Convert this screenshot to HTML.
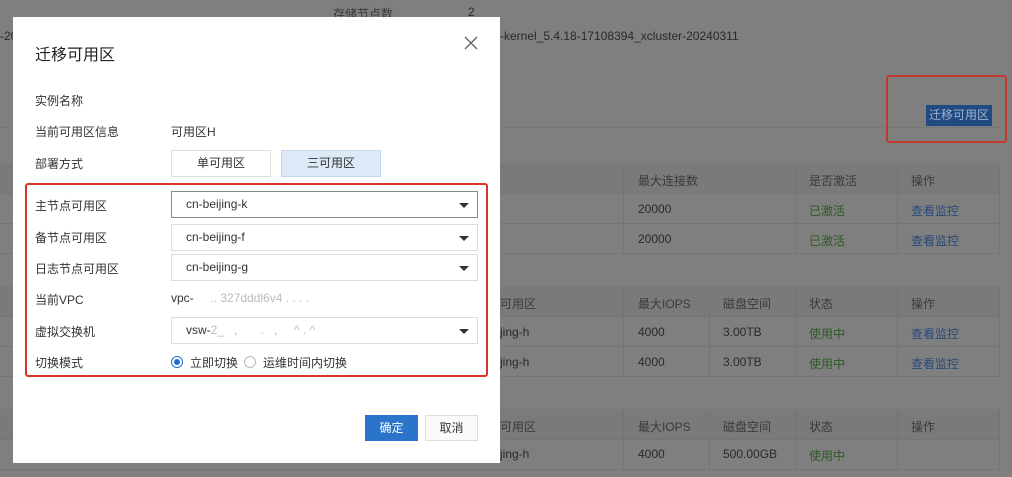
<!DOCTYPE html>
<html><head><meta charset="utf-8"><style>
*{margin:0;padding:0;box-sizing:border-box}
body{width:1012px;height:477px;overflow:hidden;background:#7f7f7f;font-family:"Liberation Sans","Noto Sans CJK SC",sans-serif;font-size:12px;color:#2a2a2a;position:relative}
.a{position:absolute;white-space:nowrap}
.tb{position:absolute;left:0;width:999px;border-bottom:1px solid #747474}
.hd{background:#7a7a7a}
.vl{position:absolute;width:1px;background:#747474}
.g{color:#2f5a22}.l{color:#284a78}
.modal{position:absolute;left:13px;top:17px;width:487px;height:446px;background:#fff}
.m{position:absolute;white-space:nowrap;color:#333}
.sel{position:absolute;left:158px;width:307px;height:27px;border:1px solid #ddd;padding-left:14px;line-height:25px;font-size:12px;color:#333}
.sel::after{content:"";position:absolute;right:8px;top:11px;border-left:5px solid transparent;border-right:5px solid transparent;border-top:5px solid #333}
</style></head><body>
<div class="a" style="left:333px;top:5px;color:#3a3a3a">存储节点数</div>
<div class="a" style="left:468px;top:5px;color:#2a2a2a">2</div>
<div class="a" style="left:0;top:29px">-20</div>
<div class="a" style="left:500px;top:29px">-kernel_5.4.18-17108394_xcluster-20240311</div>
<div class="a" style="left:0;top:127px;width:999px;border-top:1px solid #777"></div>
<div class="a" style="left:886px;top:75px;width:121px;height:68px;border:2px solid #c0392b;border-radius:3px"></div>
<div class="a" style="left:926px;top:105px;width:66px;height:21px;background:#1f4a82;color:#9fb3cc;text-align:center;line-height:21px">迁移可用区</div>
<!-- table1 -->
<div class="tb hd" style="top:163px;height:31px"></div>
<div class="tb" style="top:194px;height:30px"></div>
<div class="tb" style="top:224px;height:30px"></div>
<div class="vl" style="left:623px;top:163px;height:91px"></div><div class="vl" style="left:795px;top:163px;height:91px"></div><div class="vl" style="left:897px;top:163px;height:91px"></div><div class="vl" style="left:999px;top:163px;height:91px"></div>
<div class="a" style="left:638px;top:172px;color:#3a3a3a">最大连接数</div><div class="a" style="left:809px;top:172px;color:#3a3a3a">是否激活</div><div class="a" style="left:911px;top:172px;color:#3a3a3a">操作</div>
<div class="a" style="left:638px;top:202px">20000</div><div class="a g" style="left:809px;top:202px">已激活</div><div class="a l" style="left:911px;top:202px">查看监控</div>
<div class="a" style="left:638px;top:232px">20000</div><div class="a g" style="left:809px;top:232px">已激活</div><div class="a l" style="left:911px;top:232px">查看监控</div>
<!-- table2 -->
<div class="tb hd" style="top:286px;height:31px"></div>
<div class="tb" style="top:317px;height:30px"></div>
<div class="tb" style="top:347px;height:30px"></div>
<div class="vl" style="left:623px;top:286px;height:91px"></div><div class="vl" style="left:709px;top:286px;height:91px"></div><div class="vl" style="left:795px;top:286px;height:91px"></div><div class="vl" style="left:897px;top:286px;height:91px"></div><div class="vl" style="left:999px;top:286px;height:91px"></div>
<div class="a" style="left:500px;top:295px;color:#3a3a3a">可用区</div><div class="a" style="left:638px;top:295px;color:#3a3a3a">最大IOPS</div><div class="a" style="left:723px;top:295px;color:#3a3a3a">磁盘空间</div><div class="a" style="left:809px;top:295px;color:#3a3a3a">状态</div><div class="a" style="left:911px;top:295px;color:#3a3a3a">操作</div>
<div class="a" style="left:500px;top:325px">jing-h</div><div class="a" style="left:638px;top:325px">4000</div><div class="a" style="left:723px;top:325px">3.00TB</div><div class="a g" style="left:809px;top:325px">使用中</div><div class="a l" style="left:911px;top:325px">查看监控</div>
<div class="a" style="left:500px;top:355px">jing-h</div><div class="a" style="left:638px;top:355px">4000</div><div class="a" style="left:723px;top:355px">3.00TB</div><div class="a g" style="left:809px;top:355px">使用中</div><div class="a l" style="left:911px;top:355px">查看监控</div>
<!-- table3 -->
<div class="tb hd" style="top:409px;height:31px"></div>
<div class="tb" style="top:440px;height:30px"></div>
<div class="vl" style="left:623px;top:409px;height:61px"></div><div class="vl" style="left:709px;top:409px;height:61px"></div><div class="vl" style="left:795px;top:409px;height:61px"></div><div class="vl" style="left:897px;top:409px;height:61px"></div><div class="vl" style="left:999px;top:409px;height:61px"></div>
<div class="a" style="left:500px;top:418px;color:#3a3a3a">可用区</div><div class="a" style="left:638px;top:418px;color:#3a3a3a">最大IOPS</div><div class="a" style="left:723px;top:418px;color:#3a3a3a">磁盘空间</div><div class="a" style="left:809px;top:418px;color:#3a3a3a">状态</div><div class="a" style="left:911px;top:418px;color:#3a3a3a">操作</div>
<div class="a" style="left:500px;top:447px">jing-h</div><div class="a" style="left:638px;top:447px">4000</div><div class="a" style="left:723px;top:447px">500.00GB</div><div class="a g" style="left:809px;top:447px">使用中</div>

<div class="modal">
<div class="m" style="left:22px;top:24px;font-size:16px;color:#222">迁移可用区</div>
<svg class="m" style="left:451px;top:19px" width="14" height="14" viewBox="0 0 14 14"><path d="M1 1L13 13M13 1L1 13" stroke="#666" stroke-width="1.4"/></svg>
<div class="m" style="left:22px;top:75px">实例名称</div>
<div class="m" style="left:22px;top:106px">当前可用区信息</div>
<div class="m" style="left:158px;top:106px">可用区H</div>
<div class="m" style="left:22px;top:138px">部署方式</div>
<div class="m" style="left:158px;top:133px;width:100px;height:27px;border:1px solid #ddd;text-align:center;line-height:25px">单可用区</div>
<div class="m" style="left:268px;top:133px;width:100px;height:27px;border:1px solid #c5d9ee;background:#dce9f7;text-align:center;line-height:25px">三可用区</div>
<div class="m" style="left:12px;top:166px;width:463px;height:194px;border:2px solid #d9362b;border-radius:3px"></div>
<div class="m" style="left:22px;top:180px">主节点可用区</div>
<div class="sel" style="top:174px;border-color:#888">cn-beijing-k</div>
<div class="m" style="left:22px;top:212px">备节点可用区</div>
<div class="sel" style="top:207px">cn-beijing-f</div>
<div class="m" style="left:22px;top:243px">日志节点可用区</div>
<div class="sel" style="top:237px">cn-beijing-g</div>
<div class="m" style="left:22px;top:274px">当前VPC</div>
<div class="m" style="left:158px;top:274px">vpc-<span style="color:#bbb">&nbsp;&nbsp;&nbsp;&nbsp;&nbsp;.. 327dddl6v4 . . . .</span></div>
<div class="m" style="left:22px;top:306px">虚拟交换机</div>
<div class="sel" style="top:300px">vsw-<span style="color:#bbb">2_ &nbsp;&nbsp;,&nbsp;&nbsp;&nbsp;&nbsp;&nbsp;&nbsp;&nbsp;.&nbsp;&nbsp;&nbsp;, &nbsp;&nbsp;&nbsp; ^ . ^</span></div>
<div class="m" style="left:22px;top:337px">切换模式</div>
<div class="m" style="left:158px;top:339px;width:12px;height:12px;border:1px solid #1e6fcf;border-radius:50%"><div style="position:absolute;left:2px;top:2px;width:6px;height:6px;border-radius:50%;background:#1e6fcf"></div></div>
<div class="m" style="left:177px;top:337px">立即切换</div>
<div class="m" style="left:231px;top:339px;width:12px;height:12px;border:1px solid #bbb;border-radius:50%"></div>
<div class="m" style="left:250px;top:337px">运维时间内切换</div>
<div class="m" style="left:352px;top:398px;width:53px;height:26px;background:#2a74c9;color:#fff;text-align:center;line-height:26px">确定</div>
<div class="m" style="left:412px;top:398px;width:53px;height:26px;border:1px solid #ddd;background:#fafafa;text-align:center;line-height:24px">取消</div>
</div>
</body></html>
